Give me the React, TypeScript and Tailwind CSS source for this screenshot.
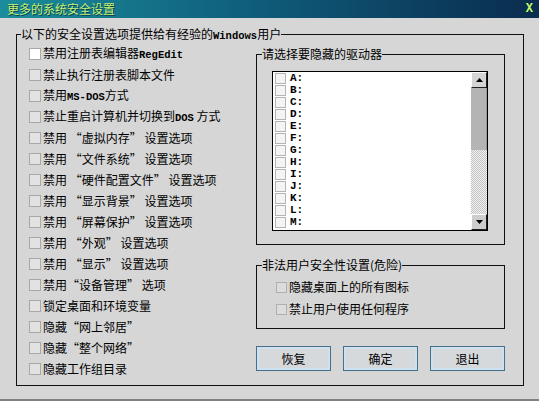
import React from 'react';

// Left column options
const mono = "font-['Liberation_Mono',monospace] font-bold text-[10.5px]";

const options: React.ReactNode[] = [
  <>禁用注册表编辑器<span className={mono}>RegEdit</span></>,
  '禁止执行注册表脚本文件',
  <>禁用<span className={mono}>MS-DOS</span>方式</>,
  <>禁止重启计算机并切换到<span className={mono}>DOS</span> 方式</>,
  '禁用 “虚拟内存” 设置选项',
  '禁用 “文件系统” 设置选项',
  '禁用 “硬件配置文件” 设置选项',
  '禁用 “显示背景” 设置选项',
  '禁用 “屏幕保护” 设置选项',
  '禁用 “外观” 设置选项',
  '禁用 “显示” 设置选项',
  '禁用“设备管理” 选项',
  '锁定桌面和环境变量',
  '隐藏“网上邻居”',
  '隐藏“整个网络”',
  '隐藏工作组目录',
];

const drives = 'ABCDEFGHIJKLM'.split('');

const cjk = "font-['Noto_Sans_CJK_SC',sans-serif]";

function Box({ white = false }: { white?: boolean }) {
  return (
    <span
      className={`inline-block w-[12px] h-[12px] border border-[#a8a8a8] shrink-0 ${white ? 'bg-white' : 'bg-[#e2e2e2]'}`}
    />
  );
}

function Btn({ label }: { label: string }) {
  return (
    <button className="w-[75px] h-[25px] border border-[#46708a] bg-[#d6d9dc] shadow-[inset_0_0_0_2px_#cfe0ee] text-[12px] leading-[14px] text-black">
      {label}
    </button>
  );
}

export default function App() {
  return (
    <div className={`w-[539px] h-[401px] bg-[#d6d6d6] flex flex-col overflow-hidden text-black ${cjk}`}>
      {/* title bar */}
      <div className="h-[18px] flex items-center justify-between bg-gradient-to-r from-[#1b8d9c] via-[#0f5a78] to-[#0a2c4e] pl-[7px] pr-[6px] shrink-0">
        <span className="text-[12px] leading-[14px] text-[#c8f070] [text-shadow:1px_1px_0_#0a4050]">更多的系统安全设置</span>
        <span className="font-['Liberation_Mono',monospace] font-bold text-[12px] leading-[14px] text-[#c4ff60]">X</span>
      </div>

      <div className="pl-[16px] pt-[9px] flex-1">
        <fieldset className="w-[508px] h-[359px] border border-[#111] m-0 p-0">
          <legend className="ml-[4px] px-0 text-[12px] leading-[14px] h-[14px]">
            以下的安全设置选项提供给有经验的<span className={mono}>Windows</span>用户
          </legend>
          <div className="flex">
            {/* left column */}
            <div className="w-[239px] pl-[12px] pt-[2px] flex flex-col">
              {options.map((o, i) => (
                <div key={i} className="h-[21px] flex items-center gap-[2px] text-[12px] leading-[14px] whitespace-pre">
                  <Box white={i === 0} />
                  <span>{o}</span>
                </div>
              ))}
            </div>

            {/* right column */}
            <div className="w-[249px] flex flex-col">
              <fieldset className="mt-[6px] w-[249px] h-[198px] border border-[#111] m-0 p-0">
                <legend className="ml-[5px] px-0 text-[12px] leading-[14px] h-[14px]">请选择要隐藏的驱动器</legend>
                <div className="pl-[15px] pt-[10px]">
                  <div className="w-[216px] h-[160px] border border-black bg-white flex">
                    <div className="flex-1 flex flex-col pl-[2px]">
                      {drives.map((d) => (
                        <div key={d} className="h-[12px] flex items-center gap-[4px]">
                          <span className="inline-block w-[11px] h-[11px] border border-[#b4b4b4] bg-[#f4f4f4]" />
                          <span className="font-['Liberation_Mono',monospace] font-bold text-[11px] leading-[11px]">{d}:</span>
                        </div>
                      ))}
                    </div>
                    {/* scrollbar */}
                    <div className="w-[16px] flex flex-col">
                      <div className="h-[16px] bg-[#d4d4d4] border-t border-l border-white border-r border-b border-r-[#202020] border-b-[#202020] flex items-center justify-center">
                        <svg width="7" height="4" viewBox="0 0 7 4"><path d="M3.5 0 L7 4 L0 4 Z" fill="#000" /></svg>
                      </div>
                      <div className="h-[62px] bg-[#b4b4b4] border-r border-[#9a9a9a]" />
                      <div className="flex-1 bg-[repeating-conic-gradient(#c4c4c4_0_25%,#f0f0f0_0_50%)] bg-[length:2px_2px]" />
                      <div className="h-[16px] bg-[#cdcdcd] border-t border-l border-white border-r border-b border-r-[#202020] border-b-[#202020] flex items-center justify-center">
                        <svg width="7" height="4" viewBox="0 0 7 4"><path d="M0 0 L7 0 L3.5 4 Z" fill="#000" /></svg>
                      </div>
                    </div>
                  </div>
                </div>
              </fieldset>

              <fieldset className="mt-[13px] w-[249px] h-[71px] border border-[#111] m-0 p-0">
                <legend className="ml-[5px] px-0 text-[12px] leading-[14px] h-[14px]">非法用户安全性设置(危险)</legend>
                <div className="pl-[19px] pt-[4px] flex flex-col">
                  {['隐藏桌面上的所有图标', '禁止用户使用任何程序'].map((t) => (
                    <div key={t} className="h-[22px] flex items-center gap-[2px] text-[12px] leading-[14px]">
                      <span className="inline-block w-[11px] h-[11px] border border-[#b0b0b0] bg-[#dcdcdc]" />
                      <span>{t}</span>
                    </div>
                  ))}
                </div>
              </fieldset>

              <div className="mt-[17px] flex gap-[12px]">
                <Btn label="恢复" />
                <Btn label="确定" />
                <Btn label="退出" />
              </div>
            </div>
          </div>
        </fieldset>
      </div>
      <div className="h-[2px] bg-[#808080] shrink-0" />
    </div>
  );
}
